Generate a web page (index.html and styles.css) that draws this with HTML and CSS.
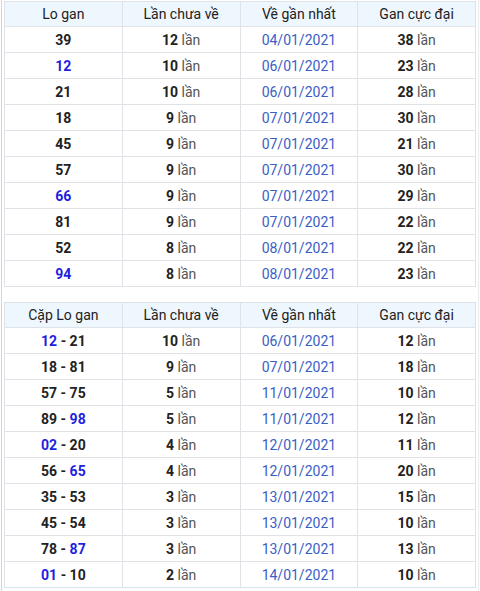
FILE: index.html
```html
<!DOCTYPE html>
<html>
<head>
<meta charset="utf-8">
<link rel="stylesheet" href="styles.css">
</head>
<body>
<div class="wrap">
<table class="gan">
<thead><tr><th>Lo gan</th><th>Lần chưa về</th><th>Về gần nhất</th><th>Gan cực đại</th></tr></thead>
<tbody>
<tr><td><b>39</b></td><td><b>12</b> lần</td><td class="d">04/01/2021</td><td><b>38</b> lần</td></tr>
<tr><td><b class="bl">12</b></td><td><b>10</b> lần</td><td class="d">06/01/2021</td><td><b>23</b> lần</td></tr>
<tr><td><b>21</b></td><td><b>10</b> lần</td><td class="d">06/01/2021</td><td><b>28</b> lần</td></tr>
<tr><td><b>18</b></td><td><b>9</b> lần</td><td class="d">07/01/2021</td><td><b>30</b> lần</td></tr>
<tr><td><b>45</b></td><td><b>9</b> lần</td><td class="d">07/01/2021</td><td><b>21</b> lần</td></tr>
<tr><td><b>57</b></td><td><b>9</b> lần</td><td class="d">07/01/2021</td><td><b>30</b> lần</td></tr>
<tr><td><b class="bl">66</b></td><td><b>9</b> lần</td><td class="d">07/01/2021</td><td><b>29</b> lần</td></tr>
<tr><td><b>81</b></td><td><b>9</b> lần</td><td class="d">07/01/2021</td><td><b>22</b> lần</td></tr>
<tr><td><b>52</b></td><td><b>8</b> lần</td><td class="d">08/01/2021</td><td><b>22</b> lần</td></tr>
<tr><td><b class="bl">94</b></td><td><b>8</b> lần</td><td class="d">08/01/2021</td><td><b>23</b> lần</td></tr>
</tbody>
</table>
<table class="gan second">
<thead><tr><th>Cặp Lo gan</th><th>Lần chưa về</th><th>Về gần nhất</th><th>Gan cực đại</th></tr></thead>
<tbody>
<tr><td><b class="bl">12</b> <b>- 21</b></td><td><b>10</b> lần</td><td class="d">06/01/2021</td><td><b>12</b> lần</td></tr>
<tr><td><b>18 - 81</b></td><td><b>9</b> lần</td><td class="d">07/01/2021</td><td><b>18</b> lần</td></tr>
<tr><td><b>57 - 75</b></td><td><b>5</b> lần</td><td class="d">11/01/2021</td><td><b>10</b> lần</td></tr>
<tr><td><b>89 -</b> <b class="bl">98</b></td><td><b>5</b> lần</td><td class="d">11/01/2021</td><td><b>12</b> lần</td></tr>
<tr><td><b class="bl">02</b> <b>- 20</b></td><td><b>4</b> lần</td><td class="d">12/01/2021</td><td><b>11</b> lần</td></tr>
<tr><td><b>56 -</b> <b class="bl">65</b></td><td><b>4</b> lần</td><td class="d">12/01/2021</td><td><b>20</b> lần</td></tr>
<tr><td><b>35 - 53</b></td><td><b>3</b> lần</td><td class="d">13/01/2021</td><td><b>15</b> lần</td></tr>
<tr><td><b>45 - 54</b></td><td><b>3</b> lần</td><td class="d">13/01/2021</td><td><b>10</b> lần</td></tr>
<tr><td><b>78 -</b> <b class="bl">87</b></td><td><b>3</b> lần</td><td class="d">13/01/2021</td><td><b>13</b> lần</td></tr>
<tr><td><b class="bl">01</b> <b>- 10</b></td><td><b>2</b> lần</td><td class="d">14/01/2021</td><td><b>10</b> lần</td></tr>
</tbody>
</table>
</div>
</body>
</html>
```

FILE: styles.css
```css
html, body {
  margin: 0;
  padding: 0;
  background: #fff;
}
body {
  font-family: Roboto, "Liberation Sans", Arial, sans-serif;
  font-size: 14px;
  color: #333;
}
.wrap {
  margin-left: 1px;
  width: 478px;
  border-left: 1px solid #d4d4d4;
  border-right: 1px solid #ececec;
  padding: 1px 2px 3px 2px;
  box-sizing: border-box;
  height: 591px;
}
.gan {
  width: 472px;
  border-collapse: collapse;
  table-layout: fixed;
}
.second {
  margin-top: 15px;
}
.gan th, .gan td {
  border: 1px solid #dfe3e8;
  text-align: center;
  padding: 0;
}
.gan th {
  background: #eef6fe;
  font-weight: normal;
  color: #222;
  height: 24px;
}
.gan td {
  height: 25px;
  color: #555;
}
.gan td b {
  color: #222;
  font-weight: bold;
}
.gan td b.bl {
  color: #1f1fe0;
}
.gan td.d {
  color: #3a5ec5;
}
```
